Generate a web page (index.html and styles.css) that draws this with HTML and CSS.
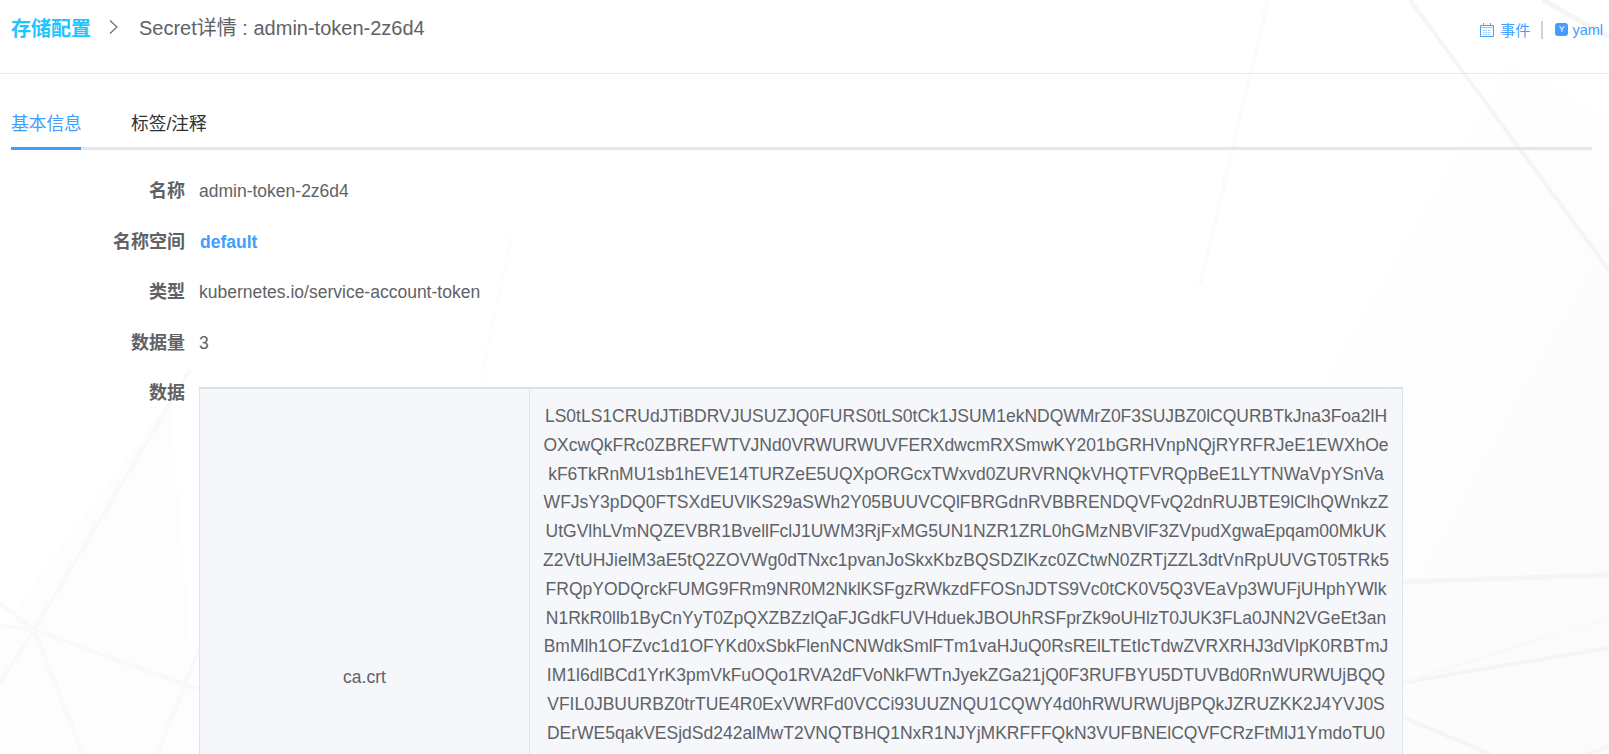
FILE: index.html
```html
<!DOCTYPE html>
<html lang="zh">
<head>
<meta charset="utf-8">
<title>Secret详情</title>
<link rel="stylesheet" href="styles.css">
</head>
<body>
<svg class="bg-lines" width="1609" height="754" viewBox="0 0 1609 754" aria-hidden="true">
  <defs>
    <linearGradient id="shade" x1="0.25" y1="0.2" x2="0.9" y2="0.9">
      <stop offset="0" stop-color="#fff"/>
      <stop offset="1" stop-color="#fbfbfc"/>
    </linearGradient>
  </defs>
  <path fill="url(#shade)" d="M1510 60L1609 120V754H1250L1323 380Z"/>
  <path fill="#fdfdfe" d="M0 630L170 400L200 754H0Z"/>
  <g fill="none" stroke="#f5f5f7">
    <path stroke-width="4" d="M1410 0L1609 270"/>
    <path stroke-width="5" d="M1543 0L1609 37"/>
    <path stroke-width="5" d="M1400 582L1609 575"/>
    <path stroke-width="4" d="M1400 683L1609 648"/>
    <path stroke-width="4" d="M1400 716L1490 754"/>
    <path stroke-width="3" d="M1587 754L1609 747"/>
    <path stroke-width="3" stroke="#f9f9fa" d="M1400 683L1609 618"/>
  </g>
  <g fill="none" stroke="#f9f9fa">
    <path stroke-width="4" stroke="#fbfbfb" d="M1268 0L1200 285"/>
    <path stroke-width="4" d="M0 683L34 630L190 370"/>
    <path stroke-width="4" d="M0 603L34 630L200 690"/>
    <path stroke-width="3" d="M0 625L34 630"/>
    <path stroke-width="4" d="M34 630L83 754"/>
    <path stroke-width="4" d="M200 647L157 754"/>
    <path stroke-width="3" stroke="#fdfdfd" d="M513 230L480 383"/>
  </g>
</svg>
<div class="page">
  <header class="topbar">
    <nav class="crumbs">
      <span class="crumb-root">存储配置</span>
      <svg class="crumb-sep" width="9" height="14" viewBox="0 0 9 14"><path d="M1 .5L8 7L1 13.5" fill="none" stroke="#6b6e75" stroke-width="1.2"/></svg>
      <span class="crumb-cur">Secret详情 : admin-token-2z6d4</span>
    </nav>
    <div class="actions">
      <svg class="ico" width="14" height="14" viewBox="0 0 14 14"><g fill="none" stroke="#409eff" stroke-width="1"><path d="M.5 2.5H13.5V13.5H.5Z"/><path stroke="#8fc4ff" d="M.5 4.5H13.5"/><path d="M3.5 0V2.5M10.5 0V2.5"/><path stroke="#8fc4ff" stroke-dasharray="1.5 1" d="M3 7.5H11M3 9.5H11M3 11.5H11"/></g></svg>
      <span class="act-text">事件</span>
      <span class="act-sep"></span>
      <span class="y-badge">Y</span>
      <span class="act-yaml">yaml</span>
    </div>
  </header>
  <div class="tabs">
    <span class="tab tab-on">基本信息</span>
    <span class="tab">标签/注释</span>
  </div>
  <section class="info">
    <div class="row"><label class="lbl">名称</label><div class="val">admin-token-2z6d4</div></div>
    <div class="row"><label class="lbl">名称空间</label><div class="val val-link">default</div></div>
    <div class="row"><label class="lbl">类型</label><div class="val">kubernetes.io/service-account-token</div></div>
    <div class="row"><label class="lbl">数据量</label><div class="val">3</div></div>
    <div class="row"><label class="lbl">数据</label>
      <table class="data">
        <tr>
          <td class="k">ca.crt</td>
          <td class="v">LS0tLS1CRUdJTiBDRVJUSUZJQ0FURS0tLS0tCk1JSUM1ekNDQWMrZ0F3SUJBZ0lCQURBTkJna3Foa2lH<br>OXcwQkFRc0ZBREFWTVJNd0VRWURWUVFERXdwcmRXSmwKY201bGRHVnpNQjRYRFRJeE1EWXhOe<br>kF6TkRnMU1sb1hEVE14TURZeE5UQXpORGcxTWxvd0ZURVRNQkVHQTFVRQpBeE1LYTNWaVpYSnVa<br>WFJsY3pDQ0FTSXdEUVlKS29aSWh2Y05BUUVCQlFBRGdnRVBBRENDQVFvQ2dnRUJBTE9lClhQWnkzZ<br>UtGVlhLVmNQZEVBR1BvellFclJ1UWM3RjFxMG5UN1NZR1ZRL0hGMzNBVlF3ZVpudXgwaEpqam00MkUK<br>Z2VtUHJielM3aE5tQ2ZOVWg0dTNxc1pvanJoSkxKbzBQSDZlKzc0ZCtwN0ZRTjZZL3dtVnRpUUVGT05TRk5<br>FRQpYODQrckFUMG9FRm9NR0M2NklKSFgzRWkzdFFOSnJDTS9Vc0tCK0V5Q3VEaVp3WUFjUHphYWlk<br>N1RkR0llb1ByCnYyT0ZpQXZBZzlQaFJGdkFUVHduekJBOUhRSFprZk9oUHlzT0JUK3FLa0JNN2VGeEt3an<br>BmMlh1OFZvc1d1OFYKd0xSbkFlenNCNWdkSmlFTm1vaHJuQ0RsRElLTEtIcTdwZVRXRHJ3dVlpK0RBTmJ<br>IM1l6dlBCd1YrK3pmVkFuOQo1RVA2dFVoNkFWTnJyekZGa21jQ0F3RUFBYU5DTUVBd0RnWURWUjBQQ<br>VFIL0JBUURBZ0trTUE4R0ExVWRFd0VCCi93UUZNQU1CQWY4d0hRWURWUjBPQkJZRUZKK2J4YVJ0S<br>DErWE5qakVESjdSd242alMwT2VNQTBHQ1NxR1NJYjMKRFFFQkN3VUFBNElCQVFCRzFtMlJ1YmdoTU0</td>
        </tr>
      </table>
    </div>
  </section>
</div>
</body>
</html>
```
FILE: styles.css
```css
html, body { margin: 0; height: 754px; overflow: hidden; }
body { position: relative; font-family: "Liberation Sans", "Noto Sans CJK SC", sans-serif; color: #606266; font-size: 17.5px; background: #fff; }
.bg-lines { position: absolute; left: 0; top: 0; z-index: 0; }
.page { position: relative; z-index: 1; }
.topbar { height: 73px; border-bottom: 1px solid #e6e8ec; display: flex; justify-content: space-between; align-items: flex-start; padding: 0 6px 0 11px; }
.crumbs { display: flex; align-items: center; height: 54px; }
.crumb-root { font-size: 20px; font-weight: 700; color: #1fc5ff; width: 98px; }
.crumb-sep { margin-right: 21px; }
.crumb-cur { font-size: 20px; color: #606266; margin-top: -1px; }
.actions { display: flex; align-items: center; height: 59px; color: #409eff; }
.ico { margin-right: 6px; }
.act-text { font-size: 15px; }
.act-sep { width: 2px; height: 18px; background: #c9d3e6; margin: 0 12px 0 11px; }
.y-badge { width: 13px; height: 13px; border-radius: 3px; background: #409eff; color: #fff; font-size: 9px; line-height: 13px; text-align: center; margin-right: 4px; }
.act-yaml { font-size: 14.5px; }
.tabs { display: flex; gap: 50px; margin: 31px 17px 0 11px; border-bottom: 3px solid #e4e7ed; height: 42px; }
.tab { font-size: 17.7px; line-height: 38px; height: 42px; color: #303133; }
.tab-on { color: #409eff; border-bottom: 3px solid #409eff; width: 70px; white-space: nowrap; }
.info { padding-top: 21px; }
.row { display: flex; align-items: flex-start; min-height: 50.5px; line-height: 41px; }
.lbl { width: 185px; text-align: right; font-weight: 700; font-size: 18px; color: #606266; flex: none; }
.val { margin-left: 14px; }
.val-link { color: #409eff; font-weight: 700; margin-left: 15px; }
.data { margin: 14px 0 0 14px; width: 1204px; border-collapse: collapse; border: 1px solid #d8e0e8; border-top-width: 2px; background: #f5f7fb; table-layout: fixed; line-height: 28.8px; }
.data td { border: 1px solid #dfe4ec; text-align: center; }
.k { width: 327px; }
.v { height: 578px; box-sizing: border-box; padding: 13px 10px 0; vertical-align: top; white-space: nowrap; overflow: hidden; }
```
